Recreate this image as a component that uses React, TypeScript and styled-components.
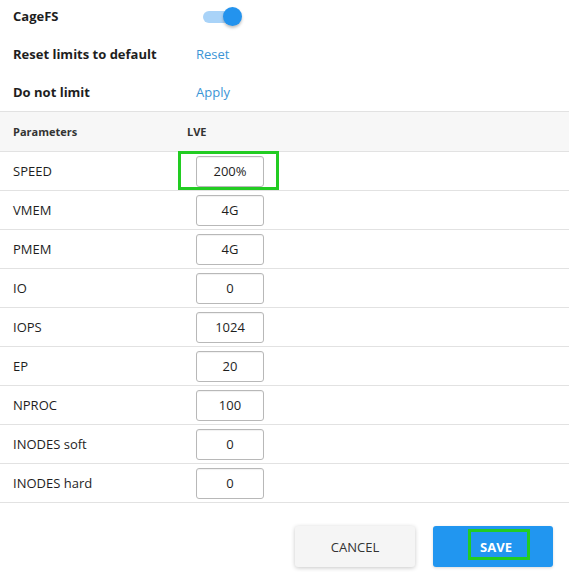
import React from "react";
import styled, { createGlobalStyle } from "styled-components";

const Global = createGlobalStyle`
  html, body { margin: 0; padding: 0; background: #fff; }
  body { font-family: "Open Sans", "Liberation Sans", sans-serif; color: #2b2b2b; }
  * { box-sizing: border-box; }
`;

const Page = styled.div`
  width: 569px;
  height: 575px;
  overflow: hidden;
  background: #fff;
`;

const Settings = styled.div`
  margin-top: -3px;
`;

const SettingRow = styled.div`
  display: grid;
  grid-template-columns: 183px 1fr;
  align-items: center;
  height: 38px;
  padding-left: 13px;
`;

const SettingLabel = styled.div`
  font-size: 13px;
  font-weight: 700;
  color: #1e1e1e;
`;

const LinkText = styled.a`
  font-size: 13px;
  color: #3b95d6;
  text-decoration: none;
  cursor: pointer;
`;

const ToggleWrap = styled.div`
  position: relative;
  width: 40px;
  height: 20px;
  margin-left: 7px;
  margin-top: 2px;
`;

const Track = styled.div<{ $on: boolean }>`
  position: absolute;
  left: 0;
  top: 4px;
  width: 34px;
  height: 12px;
  border-radius: 6px;
  background: ${(p) => (p.$on ? "#a9d3f8" : "#ccc")};
`;

const Knob = styled.div<{ $on: boolean }>`
  position: absolute;
  top: 0;
  left: ${(p) => (p.$on ? "20px" : "0")};
  width: 19px;
  height: 19px;
  border-radius: 50%;
  background: ${(p) => (p.$on ? "#2393ee" : "#f1f1f1")};
  box-shadow: 0 2px 3px rgba(0, 0, 0, 0.25);
`;

const Table = styled.div`
  border-top: 1px solid #e2e2e2;
`;

const Row = styled.div<{ $head?: boolean }>`
  display: grid;
  grid-template-columns: 174px 1fr;
  align-items: center;
  height: ${(p) => (p.$head ? "40px" : "39px")};
  border-bottom: 1px solid #e2e2e2;
  background: ${(p) => (p.$head ? "#f7f7f7" : "#fff")};
  padding-left: 13px;
`;

const HeadCell = styled.div`
  font-size: 11px;
  font-weight: 700;
  color: #333;
`;

const ParamName = styled.div`
  font-size: 13px;
  color: #1e1e1e;
`;

const InputWrap = styled.div`
  position: relative;
  width: 68px;
  margin-left: 9px;
`;

const ValueInput = styled.input`
  display: block;
  width: 68px;
  height: 31px;
  border: 1px solid #b8b8b8;
  border-radius: 3px;
  box-shadow: inset 0 1px 1px rgba(0, 0, 0, 0.06);
  text-align: center;
  font-family: "Open Sans", "Liberation Sans", sans-serif;
  font-size: 13px;
  color: #1e1e1e;
  background: #fff;
  outline: none;
`;

const Highlight = styled.div`
  position: absolute;
  border: 3px solid #22cc22;
  pointer-events: none;
`;

const Footer = styled.div`
  display: flex;
  justify-content: flex-end;
  gap: 18px;
  padding: 23px 16px 0 0;
`;

const Button = styled.button<{ $primary?: boolean }>`
  width: 120px;
  height: 41px;
  border: none;
  border-radius: 3px;
  font-family: "Open Sans", "Liberation Sans", sans-serif;
  font-size: 13px;
  font-weight: ${(p) => (p.$primary ? 700 : 400)};
  color: ${(p) => (p.$primary ? "#fff" : "#333")};
  background: ${(p) => (p.$primary ? "#2196f0" : "#f5f5f5")};
  box-shadow: ${(p) =>
    p.$primary ? "0 1px 3px rgba(0,0,0,0.15)" : "0 1px 4px rgba(0,0,0,0.22)"};
  cursor: pointer;
  padding: 0;
`;

const BtnLabel = styled.span`
  position: relative;
  display: inline-block;
  left: 3px;
`;

const params = [
  { name: "SPEED", value: "200%" },
  { name: "VMEM", value: "4G" },
  { name: "PMEM", value: "4G" },
  { name: "IO", value: "0" },
  { name: "IOPS", value: "1024" },
  { name: "EP", value: "20" },
  { name: "NPROC", value: "100" },
  { name: "INODES soft", value: "0" },
  { name: "INODES hard", value: "0" },
];

export default function App() {
  return (
    <Page>
      <Global />
      <Settings>
        <SettingRow>
          <SettingLabel>CageFS</SettingLabel>
          <ToggleWrap>
            <Track $on />
            <Knob $on />
          </ToggleWrap>
        </SettingRow>
        <SettingRow>
          <SettingLabel>Reset limits to default</SettingLabel>
          <LinkText>Reset</LinkText>
        </SettingRow>
        <SettingRow>
          <SettingLabel>Do not limit</SettingLabel>
          <LinkText>Apply</LinkText>
        </SettingRow>
      </Settings>
      <Table>
        <Row $head>
          <HeadCell>Parameters</HeadCell>
          <HeadCell>LVE</HeadCell>
        </Row>
        {params.map((p, i) => (
          <Row key={p.name}>
            <ParamName>{p.name}</ParamName>
            <InputWrap>
              <ValueInput defaultValue={p.value} />
              {i === 0 && (
                <Highlight style={{ left: -18, right: -15, top: -5, bottom: -3 }} />
              )}
            </InputWrap>
          </Row>
        ))}
      </Table>
      <Footer>
        <Button>CANCEL</Button>
        <Button $primary>
          <BtnLabel>
            SAVE
            <Highlight style={{ left: -12, right: -18, top: -9, bottom: -4 }} />
          </BtnLabel>
        </Button>
      </Footer>
    </Page>
  );
}
